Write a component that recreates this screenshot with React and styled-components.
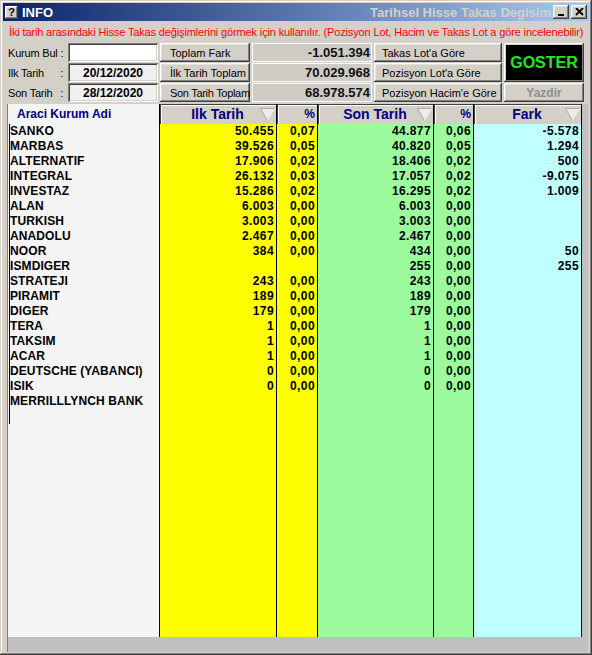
import styled, { createGlobalStyle } from "styled-components";

const GlobalStyle = createGlobalStyle`
  html, body {
    margin: 0;
    padding: 0;
    background: #d4d0c8;
  }
  body {
    font-family: "Liberation Sans", Arial, sans-serif;
    overflow: hidden;
  }
  * { box-sizing: border-box; }
`;

const rows = [
  { name: "SANKO", ilk: "50.455", ilkP: "0,07", son: "44.877", sonP: "0,06", fark: "-5.578" },
  { name: "MARBAS", ilk: "39.526", ilkP: "0,05", son: "40.820", sonP: "0,05", fark: "1.294" },
  { name: "ALTERNATIF", ilk: "17.906", ilkP: "0,02", son: "18.406", sonP: "0,02", fark: "500" },
  { name: "INTEGRAL", ilk: "26.132", ilkP: "0,03", son: "17.057", sonP: "0,02", fark: "-9.075" },
  { name: "INVESTAZ", ilk: "15.286", ilkP: "0,02", son: "16.295", sonP: "0,02", fark: "1.009" },
  { name: "ALAN", ilk: "6.003", ilkP: "0,00", son: "6.003", sonP: "0,00", fark: "" },
  { name: "TURKISH", ilk: "3.003", ilkP: "0,00", son: "3.003", sonP: "0,00", fark: "" },
  { name: "ANADOLU", ilk: "2.467", ilkP: "0,00", son: "2.467", sonP: "0,00", fark: "" },
  { name: "NOOR", ilk: "384", ilkP: "0,00", son: "434", sonP: "0,00", fark: "50" },
  { name: "ISMDIGER", ilk: "", ilkP: "", son: "255", sonP: "0,00", fark: "255" },
  { name: "STRATEJI", ilk: "243", ilkP: "0,00", son: "243", sonP: "0,00", fark: "" },
  { name: "PIRAMIT", ilk: "189", ilkP: "0,00", son: "189", sonP: "0,00", fark: "" },
  { name: "DIGER", ilk: "179", ilkP: "0,00", son: "179", sonP: "0,00", fark: "" },
  { name: "TERA", ilk: "1", ilkP: "0,00", son: "1", sonP: "0,00", fark: "" },
  { name: "TAKSIM", ilk: "1", ilkP: "0,00", son: "1", sonP: "0,00", fark: "" },
  { name: "ACAR", ilk: "1", ilkP: "0,00", son: "1", sonP: "0,00", fark: "" },
  { name: "DEUTSCHE (YABANCI)", ilk: "0", ilkP: "0,00", son: "0", sonP: "0,00", fark: "" },
  { name: "ISIK", ilk: "0", ilkP: "0,00", son: "0", sonP: "0,00", fark: "" },
  { name: "MERRILLLYNCH BANK", ilk: "", ilkP: "", son: "", sonP: "", fark: "" },
];

const columns = [
  { key: "ilk", title: "Ilk Tarih", width: 117, bg: "#ffff00", sort: true },
  { key: "ilkP", title: "%", width: 41, bg: "#ffff00", pct: true },
  { key: "son", title: "Son Tarih", width: 116, bg: "#9cfb9c", sort: true },
  { key: "sonP", title: "%", width: 40, bg: "#9cfb9c", pct: true },
  { key: "fark", title: "Fark", width: 108, bg: "#bfffff", sort: true },
];

const raised = `
  box-shadow: inset -1px -1px #404040, inset 1px 1px #ffffff,
    inset -2px -2px #808080, inset 2px 2px #e4e2dc;
`;
const sunken = `
  box-shadow: inset 1px 1px #808080, inset -1px -1px #ffffff,
    inset 2px 2px #404040, inset -2px -2px #d4d0c8;
`;

const SortMark = () => (
  <svg width="15" height="13" viewBox="0 0 15 13">
    <polygon points="0.5,0.5 14.5,0.5 7.5,12.5" fill="#ececec" stroke="#a8a8a8" />
    <polyline points="7.5,12.5 14.5,0.5" fill="none" stroke="#ffffff" />
  </svg>
);

const App = () => {
  return (
    <>
      <GlobalStyle />
      <Window>
        <TitleBar>
          <HelpIcon>?</HelpIcon>
          <TitleText>INFO</TitleText>
          <Spacer />
          <TitleClip>Tarihsel Hisse Takas Degisim</TitleClip>
          <TitleButtons>
            <CaptionButton>
              <svg width="8" height="8" viewBox="0 0 8 8">
                <rect x="1" y="6" width="6" height="2" fill="#000" />
              </svg>
            </CaptionButton>
            <CaptionButton>
              <svg width="9" height="8" viewBox="0 0 9 8">
                <path d="M1 0 L8 7 M8 0 L1 7" stroke="#000" strokeWidth="1.8" />
              </svg>
            </CaptionButton>
          </TitleButtons>
        </TitleBar>

        <Body>
          <Notice>
            İki tarih arasındaki Hisse Takas değişimlerini görmek için kullanılır. (Pozisyon Lot, Hacim ve Takas Lot a göre incelenebilir)
          </Notice>

          <Form>
            <Label><span>Kurum Bul</span><span>:</span></Label>
            <Input $white />
            <FormButton>Toplam Fark</FormButton>
            <ValueBox>-1.051.394</ValueBox>
            <FormButton $pad={8}>Takas Lot'a Göre</FormButton>
            <GoButton>GOSTER</GoButton>

            <Label><span>Ilk Tarih</span><span>:</span></Label>
            <Input>20/12/2020</Input>
            <FormButton>İlk Tarih Toplam</FormButton>
            <ValueBox>70.029.968</ValueBox>
            <FormButton $pad={8}>Pozisyon Lot'a Göre</FormButton>

            <Label><span>Son Tarih</span><span>:</span></Label>
            <Input>28/12/2020</Input>
            <FormButton $tight>Son Tarih Toplam</FormButton>
            <ValueBox>68.978.574</ValueBox>
            <FormButton $pad={8}>Pozisyon Hacim'e Göre</FormButton>
            <PrintButton>Yazdir</PrintButton>
          </Form>

          <GridPanel>
            <Columns>
              <NameColumn>
                <NameHeader>Araci Kurum Adi</NameHeader>
                <NameBody>
                  {rows.map((r) => (
                    <NameCell key={r.name}>{r.name}</NameCell>
                  ))}
                  <NameCell />
                </NameBody>
              </NameColumn>
              {columns.map((c) => (
                <DataColumn key={c.key} style={{ width: c.width }}>
                  <HeadCell $pct={c.pct}>
                    {c.pct ? (
                      <span>{c.title}</span>
                    ) : (
                      <>
                        <span />
                        <HeadTitle>{c.title}</HeadTitle>
                        <SortBox>{c.sort && <SortMark />}</SortBox>
                      </>
                    )}
                  </HeadCell>
                  <DataBody $bg={c.bg}>
                    {rows.map((r) => (
                      <NumCell key={r.name}>{r[c.key]}</NumCell>
                    ))}
                  </DataBody>
                </DataColumn>
              ))}
            </Columns>
            <ScrollBand />
          </GridPanel>
        </Body>
      </Window>
    </>
  );
};

// Pencere
const Window = styled.div`
  width: 592px;
  height: 655px;
  display: flex;
  flex-direction: column;
  padding: 3px;
  background: #d4d0c8;
  box-shadow: inset -1px -1px #404040, inset 1px 1px #d4d0c8,
    inset -2px -2px #808080, inset 2px 2px #ffffff;
`;

const TitleBar = styled.div`
  height: 18px;
  display: flex;
  align-items: center;
  padding: 0 2px 0 2px;
  background: linear-gradient(to right, #0a246a, #a6caf0);
`;

const HelpIcon = styled.span`
  width: 13px;
  height: 13px;
  display: flex;
  align-items: center;
  justify-content: center;
  background: #d4d0c8;
  ${raised};
  font-size: 11px;
  font-weight: 700;
  color: #000;
  line-height: 1;
`;

const TitleText = styled.span`
  margin-left: 4px;
  color: #fff;
  font-size: 13px;
  font-weight: 700;
`;

const Spacer = styled.div`
  flex: 1;
`;

const TitleClip = styled.div`
  white-space: nowrap;
  margin-right: 2px;
  color: #d4d0c8;
  font-size: 13px;
  font-weight: 700;
`;

const TitleButtons = styled.div`
  display: flex;
  gap: 2px;
`;

const CaptionButton = styled.div`
  width: 16px;
  height: 14px;
  display: flex;
  align-items: center;
  justify-content: center;
  background: #d4d0c8;
  ${raised};
`;

const Body = styled.div`
  flex: 1;
  display: flex;
  flex-direction: column;
  padding: 0 1px 0 4px;
  min-height: 0;
`;

const Notice = styled.div`
  height: 21px;
  display: flex;
  align-items: center;
  padding-left: 2px;
  color: #ff0000;
  font-size: 11px;
  letter-spacing: -0.14px;
  white-space: nowrap;
`;

// Form alani
const Form = styled.div`
  margin-top: 1px;
  display: grid;
  grid-template-columns: 58px 90px 90px 120px 128px 80px;
  grid-template-rows: 19px 19px 19px;
  column-gap: 2px;
  row-gap: 1px;
  padding-left: 1px;
`;

const Label = styled.div`
  display: flex;
  justify-content: space-between;
  align-items: center;
  gap: 3px;
  padding-right: 3px;
  font-size: 11px;
  letter-spacing: -0.2px;
  white-space: nowrap;
  color: #000;
`;

const Input = styled.div`
  display: flex;
  align-items: center;
  justify-content: center;
  background: ${(p) => (p.$white ? "#ffffff" : "#f0f0f0")};
  ${sunken};
  font-size: 12px;
  font-weight: 700;
  color: #000;
`;

const FormButton = styled.div`
  display: flex;
  align-items: center;
  padding-left: ${(p) => p.$pad || 10}px;
  background: #d4d0c8;
  ${raised};
  font-size: 11px;
  letter-spacing: ${(p) => (p.$tight ? "-0.3px" : "0")};
  color: #000;
  white-space: nowrap;
`;

const ValueBox = styled.div`
  display: flex;
  align-items: center;
  justify-content: flex-end;
  padding-right: 2px;
  background: #cfccc6;
  box-shadow: inset 1px 1px #ffffff, inset -1px -1px #ffffff;
  font-size: 13px;
  font-weight: 700;
  color: #111;
`;

const GoButton = styled.div`
  grid-column: 6;
  grid-row: 1 / span 2;
  display: flex;
  align-items: center;
  justify-content: center;
  background: #000;
  box-shadow: inset -1px -1px #404040, inset 1px 1px #ffffff,
    inset -2px -2px #808080, inset 2px 2px #d4d0c8;
  color: #22e622;
  font-size: 16px;
  font-weight: 700;
`;

const PrintButton = styled.div`
  display: flex;
  align-items: center;
  justify-content: center;
  background: #d4d0c8;
  ${raised};
  color: #8e8e8e;
  font-size: 12px;
  font-weight: 700;
`;

// Tablo
const GridPanel = styled.div`
  flex: 1;
  margin-top: 2px;
  display: flex;
  flex-direction: column;
  background: #c0c0c0;
  box-shadow: inset 1px 0 #808080;
  padding-left: 1px;
  min-height: 0;
`;

const Columns = styled.div`
  flex: 1;
  display: flex;
  min-height: 0;
`;

const NameColumn = styled.div`
  width: 152px;
  display: flex;
  flex-direction: column;
  background: #f4f4f4;
  border-right: 1px solid #000;
`;

const NameHeader = styled.div`
  height: 20px;
  display: flex;
  align-items: center;
  padding-left: 9px;
  color: #000080;
  font-size: 12px;
  font-weight: 700;
`;

const NameBody = styled.div`
  flex: 1;
  padding-left: 1px;
`;

const NameCell = styled.div`
  height: 15px;
  line-height: 15px;
  border-left: 1px solid #000;
  font-size: 12px;
  font-weight: 700;
  letter-spacing: 0.1px;
  color: #000;
  white-space: nowrap;
`;

const DataColumn = styled.div`
  display: flex;
  flex-direction: column;
`;

const HeadCell = styled.div`
  height: 20px;
  display: grid;
  grid-template-columns: ${(p) => (p.$pct ? "1fr" : "1fr auto 1fr")};
  align-items: center;
  justify-items: ${(p) => (p.$pct ? "end" : "stretch")};
  padding-right: ${(p) => (p.$pct ? "2px" : "1px")};
  background: #d4d0c8;
  border-right: 1px solid #000;
  box-shadow: inset 0 1px #404040, inset 1px 0 #404040, inset 0 2px #ffffff, inset 2px 0 #ffffff;
  color: #000080;
  font-size: ${(p) => (p.$pct ? "12px" : "14px")};
  font-weight: 700;
`;

const HeadTitle = styled.span`
  white-space: nowrap;
`;

const SortBox = styled.span`
  display: flex;
  justify-content: flex-end;
`;

const DataBody = styled.div`
  flex: 1;
  background: ${(p) => p.$bg};
  border-right: 1px solid #000;
`;

const NumCell = styled.div`
  height: 15px;
  line-height: 15px;
  text-align: right;
  padding-right: 2px;
  font-size: 12px;
  font-weight: 700;
  letter-spacing: 0.4px;
  color: #000;
`;

const ScrollBand = styled.div`
  height: 15px;
  background: #c0c0c0;
`;

export default App;
